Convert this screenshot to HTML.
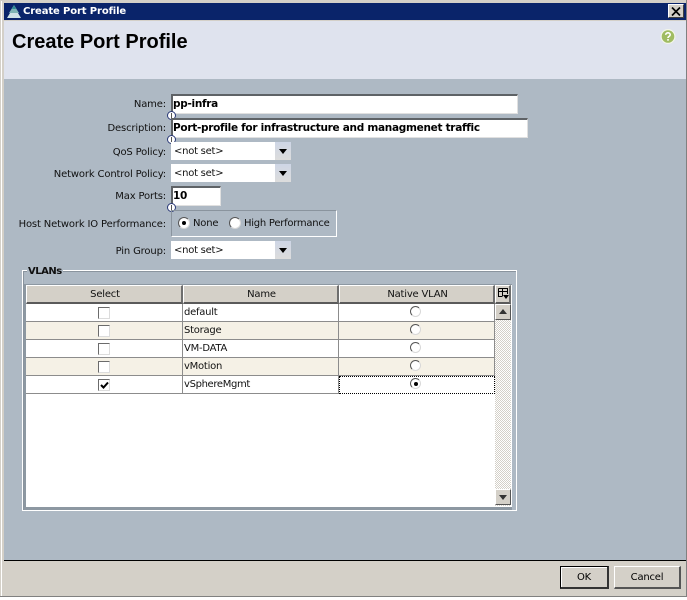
<!DOCTYPE html>
<html><head><meta charset="utf-8">
<style>
html,body{margin:0;padding:0;background:#fff;width:687px;height:600px;overflow:hidden}
*{box-sizing:border-box}
body{font-family:"DejaVu Sans","Liberation Sans",sans-serif;font-size:10px;color:#111;position:relative}
div,span{position:absolute}
.l{right:521px;white-space:nowrap;text-align:right;height:14px;line-height:16px;letter-spacing:-.15px}
.in{background:#fff;border:1px solid #e0e0e0;border-top:2px solid #5e6266;border-left:2px solid #5e6266;font-weight:bold;font-size:10.5px;line-height:17px;padding-left:0;white-space:nowrap;color:#000;letter-spacing:-.29px;text-indent:0}
.sel{left:171px;width:120px;height:18px;background:#fff;line-height:19px;padding-left:3px;letter-spacing:-.25px}
.sel i{position:absolute;right:0;top:0;width:16px;height:18px;background:linear-gradient(#ced6e6,#dcdcdc)}
.sel i:after{content:"";position:absolute;left:4px;top:7px;border:4px solid transparent;border-top:5px solid #000;border-bottom:0}
.info{left:167px;width:9px;height:9px;border:1px solid #2b3a78;border-radius:50%;background:#fff}
.info:after{content:"";position:absolute;left:3px;top:1px;width:1px;height:5px;background:#555}
.cell{border-right:1px solid #8c8c8c;border-bottom:1px solid #8c8c8c;height:18px;line-height:17px;white-space:nowrap;letter-spacing:-.25px}
.hd{top:285px;height:19px;background:#d4d0c8;border:1px solid #fff;border-right:2px solid #6e6e6e;border-bottom:2px solid #5a5a5a;text-align:center;line-height:17px;padding-left:2px;letter-spacing:-.2px}
.cb{left:98px;width:12px;height:12px;background:#fff;border:1px solid #dcdcdc;border-top:1px solid #6b6b6b;border-left:1px solid #6b6b6b}
.rd{left:410px;width:11px;height:11px;border-radius:50%;background:#fff;border:1px solid #d8d8d8;border-top-color:#555;border-left-color:#555}
.sb{background:#d4d0c8;border:1px solid #fff;border-right:1px solid #555;border-bottom:1px solid #555}
.btn{background:#d4d0c8;border:1px solid #fff;border-right:2px solid #555;border-bottom:2px solid #555;text-align:center;color:#000;font-size:10px;letter-spacing:-.2px}
</style></head><body>
<div style="left:0;top:0;width:687px;height:597px;background:#d4d0c8"></div>
<div style="left:1px;top:1px;width:1px;height:595px;background:#fff"></div>
<div style="left:0;top:596px;width:687px;height:1px;background:#808080"></div>
<div style="left:686px;top:0;width:1px;height:597px;background:#808080"></div>

<div style="left:4px;top:3px;width:682px;height:17px;background:#0a246a"></div>
<svg style="position:absolute;left:6px;top:4px" width="16" height="15" viewBox="0 0 16 15"><path d="M8 1 L13 9 H3Z" fill="#7fb5b5"/><path d="M1 14 L4 9 H12 L15 14Z" fill="#cfe3e6"/><path d="M6 5 L8 1 L10 5Z" fill="#2f8c95"/></svg>
<div style="left:23px;top:3px;height:17px;line-height:18px;color:#fff;font-weight:bold;font-size:10px;letter-spacing:-.12px;white-space:nowrap">Create Port Profile</div>
<div style="left:668px;top:4px;width:16px;height:14px;background:#d4d0c8;border:1px solid #fff;border-right-color:#404040;border-bottom-color:#404040">
<svg style="position:absolute;left:2px;top:2px" width="10" height="9" viewBox="0 0 10 9"><path d="M1 .5 L9 8.5 M9 .5 L1 8.5" stroke="#000" stroke-width="1.7"/></svg></div>

<div style="left:4px;top:21px;width:682px;height:58px;background:#dfe3ee"></div>
<div style="left:12px;top:30px;font-family:'Liberation Sans',sans-serif;font-weight:bold;font-size:20px;line-height:24px;color:#000;white-space:nowrap">Create Port Profile</div>
<svg style="position:absolute;left:660px;top:28px" width="16" height="17" viewBox="0 0 16 17"><circle cx="8" cy="8.5" r="7.5" fill="#f3f6e8"/><circle cx="8" cy="8.5" r="6.3" fill="#a0bc62"/><path d="M5.7 6.8 C5.8 4.2 10.2 4.2 10.2 6.8 C10.2 8.5 8 8.3 8 10" fill="none" stroke="#fff" stroke-width="1.6"/><rect x="7.2" y="11" width="1.6" height="1.7" fill="#fff"/></svg>

<div style="left:4px;top:79px;width:682px;height:481px;background:#aeb9c4"></div>
<div style="left:4px;top:560px;width:682px;height:1px;background:#000"></div>

<div class="l" style="top:97px">Name:</div>
<div class="in" style="left:171px;top:94px;width:347px;height:20px">pp-infra</div>
<div class="info" style="top:111px"></div>
<div class="l" style="top:121px">Description:</div>
<div class="in" style="left:171px;top:118px;width:357px;height:20px">Port-profile for infrastructure and managmenet traffic</div>
<div class="info" style="top:135px"></div>
<div class="l" style="top:145px">QoS Policy:</div>
<div class="sel" style="top:142px">&lt;not set&gt;<i></i></div>
<div class="l" style="top:167px">Network Control Policy:</div>
<div class="sel" style="top:164px">&lt;not set&gt;<i></i></div>
<div class="l" style="top:189px">Max Ports:</div>
<div class="in" style="left:171px;top:186px;width:50px;height:20px">10</div>
<div class="info" style="top:203px"></div>

<div class="l" style="top:217px">Host Network IO Performance:</div>
<div style="left:171px;top:210px;width:166px;height:27px;border:1px solid #fff;border-top-color:#8a949e;border-left-color:#8a949e"></div>
<div class="rd" style="left:178px;top:217px;width:12px;height:12px;background:#fff"></div>
<div style="left:182px;top:221px;width:4px;height:4px;border-radius:50%;background:#000"></div>
<div style="left:193px;top:217px;height:14px;line-height:14px;letter-spacing:-.2px">None</div>
<div class="rd" style="left:229px;top:217px;width:12px;height:12px"></div>
<div style="left:244px;top:217px;height:14px;line-height:14px;white-space:nowrap;letter-spacing:-.25px">High Performance</div>
<div class="l" style="top:244px">Pin Group:</div>
<div class="sel" style="top:241px">&lt;not set&gt;<i></i></div>

<div style="left:22px;top:270px;width:495px;height:241px;border:1px solid #fff"></div>
<div style="left:23px;top:271px;width:493px;height:239px;border:1px solid #8a949e;border-right:0;border-bottom:0"></div>
<div style="left:27px;top:265px;height:14px;line-height:14px;padding:0 1px;background:#aeb9c4;font-weight:bold;font-size:10px;letter-spacing:-.5px">VLANs</div>

<div style="left:24px;top:284px;width:488px;height:226px;background:#8d98a2"></div>
<div style="left:26px;top:285px;width:486px;height:222px;background:#fff"></div>
<div class="hd" style="left:26px;width:157px">Select</div>
<div class="hd" style="left:183px;width:156px">Name</div>
<div class="hd" style="left:339px;width:156px">Native VLAN</div>
<div class="hd" style="left:495px;width:16px"></div>
<svg style="position:absolute;left:497px;top:287px" width="12" height="13" viewBox="0 0 12 13"><path d="M1.5 1.5 H10.5 V7 M1.5 1.5 V9.5 H5 M1.5 4.5 H10 M5.5 1.5 V9.5" fill="none" stroke="#000"/><path d="M6 8 H12 L9 12Z" fill="#000"/></svg>

<div class="cell" style="left:26px;top:304px;width:157px;background:#fff"></div>
<div class="cell" style="left:183px;top:304px;width:156px;background:#fff;padding-left:1px">default</div>
<div class="cell" style="left:339px;top:304px;width:156px;background:#fff"></div>
<div class="cell" style="left:26px;top:322px;width:157px;background:#f5f1e6"></div>
<div class="cell" style="left:183px;top:322px;width:156px;background:#f5f1e6;padding-left:1px">Storage</div>
<div class="cell" style="left:339px;top:322px;width:156px;background:#f5f1e6"></div>
<div class="cell" style="left:26px;top:340px;width:157px;background:#fff"></div>
<div class="cell" style="left:183px;top:340px;width:156px;background:#fff;padding-left:1px">VM-DATA</div>
<div class="cell" style="left:339px;top:340px;width:156px;background:#fff"></div>
<div class="cell" style="left:26px;top:358px;width:157px;background:#f5f1e6"></div>
<div class="cell" style="left:183px;top:358px;width:156px;background:#f5f1e6;padding-left:1px">vMotion</div>
<div class="cell" style="left:339px;top:358px;width:156px;background:#f5f1e6"></div>
<div class="cell" style="left:26px;top:376px;width:157px;background:#fff"></div>
<div class="cell" style="left:183px;top:376px;width:156px;background:#fff;padding-left:1px;letter-spacing:-.35px">vSphereMgmt</div>
<div style="left:339px;top:376px;width:156px;height:18px;background:#fff;border:1px dotted #000"></div>

<div class="cb" style="top:307px"></div>
<div class="cb" style="top:325px"></div>
<div class="cb" style="top:343px"></div>
<div class="cb" style="top:361px"></div>
<div class="cb" style="top:379px"></div>
<svg style="position:absolute;left:100px;top:381px" width="9" height="9" viewBox="0 0 9 9"><path d="M1 4 L3.5 6.5 L8 1.5" fill="none" stroke="#000" stroke-width="2"/></svg>
<div class="rd" style="top:306px"></div>
<div class="rd" style="top:324px"></div>
<div class="rd" style="top:342px"></div>
<div class="rd" style="top:360px"></div>
<div class="rd" style="top:378px"></div>
<div style="left:414px;top:382px;width:4px;height:4px;border-radius:50%;background:#000"></div>

<div style="left:495px;top:304px;width:16px;height:202px;background-color:#eceae6;background-image:repeating-conic-gradient(#d4d0c8 0 25%,#fff 0 50%);background-size:2px 2px"></div>
<div class="sb" style="left:495px;top:304px;width:16px;height:16px"></div>
<div style="left:499px;top:309px;width:0;height:0;border:4px solid transparent;border-bottom:5px solid #333;border-top:0"></div>
<div class="sb" style="left:495px;top:489px;width:16px;height:16px"></div>
<div style="left:499px;top:495px;width:0;height:0;border:4px solid transparent;border-top:5px solid #333;border-bottom:0"></div>

<div class="btn" style="left:560px;top:566px;width:49px;height:23px;line-height:21px;border:1px solid #000;border-right:2px solid #333;border-bottom:2px solid #333;box-shadow:inset 1px 1px 0 #fff">OK</div>
<div class="btn" style="left:614px;top:566px;width:67px;height:23px;line-height:21px">Cancel</div>
</body></html>
